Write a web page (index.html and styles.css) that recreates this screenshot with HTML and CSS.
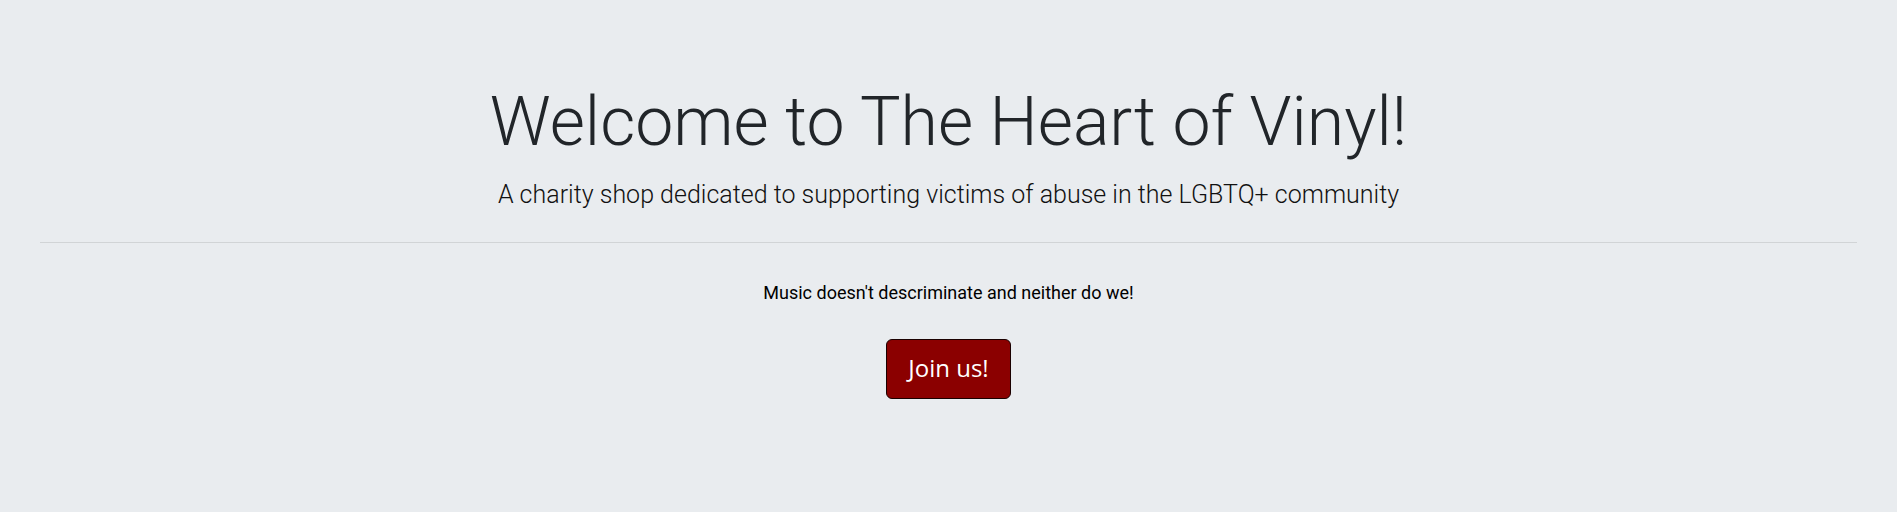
FILE: index.html
```html
<!DOCTYPE html>
<html lang="en">
<head>
<meta charset="utf-8">
<title>The Heart of Vinyl</title>
<link rel="stylesheet" href="styles.css">
</head>
<body>
<main class="jumbotron">
  <h1 class="display">Welcome to The Heart of Vinyl!</h1>
  <p class="lead">A charity shop dedicated to supporting victims of abuse in the LGBTQ+ community</p>
  <hr class="divider">
  <p class="tagline">Music doesn't descriminate and neither do we!</p>
  <div class="actions">
    <a class="btn-join" href="#">Join us!</a>
  </div>
</main>
</body>
</html>
```

FILE: styles.css
```css
html, body {
  margin: 0;
  padding: 0;
}
body {
  background: #e9ecef;
  font-family: Roboto, "Liberation Sans", sans-serif;
  color: #212529;
  height: 512px;
  overflow: hidden;
}
.jumbotron {
  padding: 82px 40px 0;
  text-align: center;
}
.display {
  font-family: Roboto, sans-serif;
  font-weight: 300;
  font-size: 68px;
  line-height: 1.2;
  margin: 0 0 12px;
  color: #212529;
}
.lead {
  font-family: Roboto, sans-serif;
  font-weight: 300;
  font-size: 25px;
  line-height: 1.5;
  margin: 0;
  color: #111;
}
.divider {
  border: 0;
  border-top: 1px solid rgba(0, 0, 0, 0.1);
  margin: 29px 0 36px;
  height: 0;
}
.tagline {
  font-family: Roboto, sans-serif;
  font-size: 18px;
  line-height: 1.5;
  margin: 0 0 33px;
  color: #000;
}
.actions {
  display: flex;
  justify-content: center;
}
.btn-join {
  display: inline-block;
  box-sizing: border-box;
  height: 60px;
  width: 125px;
  line-height: 56px;
  font-family: "Open Sans", "Noto Sans", sans-serif;
  font-size: 24px;
  color: #fff;
  background: #8b0000;
  border: 1px solid #1a0000;
  border-radius: 6px;
  text-decoration: none;
}
```
